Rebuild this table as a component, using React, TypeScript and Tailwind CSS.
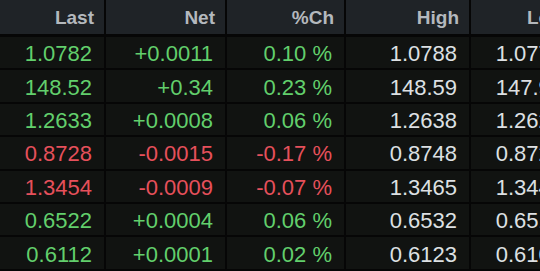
import React from "react";

// Tableau de cotations : devises avec variation, plus haut, plus bas

type Quote = {
  last: string;
  net: string;
  pct: string;
  high: string;
  low: string;
  up: boolean;
};

const quotes: Quote[] = [
  { last: "1.0782", net: "+0.0011", pct: "0.10 %", high: "1.0788", low: "1.0771", up: true },
  { last: "148.52", net: "+0.34", pct: "0.23 %", high: "148.59", low: "147.92", up: true },
  { last: "1.2633", net: "+0.0008", pct: "0.06 %", high: "1.2638", low: "1.2620", up: true },
  { last: "0.8728", net: "-0.0015", pct: "-0.17 %", high: "0.8748", low: "0.8725", up: false },
  { last: "1.3454", net: "-0.0009", pct: "-0.07 %", high: "1.3465", low: "1.3440", up: false },
  { last: "0.6522", net: "+0.0004", pct: "0.06 %", high: "0.6532", low: "0.6510", up: true },
  { last: "0.6112", net: "+0.0001", pct: "0.02 %", high: "0.6123", low: "0.6105", up: true },
];

const widths = ["w-[106px]", "w-[121px]", "w-[119px]", "w-[125px]", "w-[106px]"];
const headers = ["Last", "Net", "%Ch", "High", "Low"];

export default function App() {
  return (
    <div
      className="w-[540px] h-[271px] overflow-hidden bg-[#101210]"
      style={{ fontFamily: '"Liberation Sans", Arial, sans-serif' }}
    >
      <div className="w-[577px]">
        {/* En-tête */}
        <div className="flex h-[37px] bg-[#1f2327] border-b-[3px] border-[#060606]">
          {headers.map((h, i) => (
            <div
              key={h}
              className={`${widths[i]} shrink-0 flex items-center justify-end pr-[10px] pt-[2px] border-r-2 border-[#060606] text-[19px] font-bold text-[#b4b8bd]`}
            >
              {h}
            </div>
          ))}
        </div>

        {/* Lignes */}
        {quotes.map((q, r) => {
          const color = q.up ? "text-[#62cf6c]" : "text-[#e6505b]";
          const cells = [q.last, q.net, q.pct, q.high, q.low];
          return (
            <div
              key={r}
              className="flex h-[33.4px] bg-[#111311] border-b-2 border-[#060606]"
            >
              {cells.map((c, i) => (
                <div
                  key={i}
                  className={`${widths[i]} shrink-0 flex items-center justify-end pr-[12px] pt-[2px] border-r-2 border-[#060606] text-[22px] ${
                    i < 3 ? color : "text-[#dde0e3]"
                  }`}
                >
                  {c}
                </div>
              ))}
            </div>
          );
        })}
      </div>
    </div>
  );
}
